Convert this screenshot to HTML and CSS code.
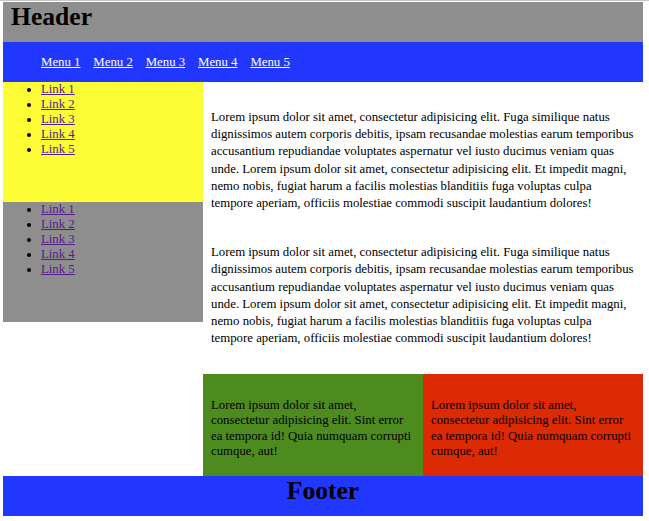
FILE: index.html
```html
<!DOCTYPE html>
<html>
<head>
<meta charset="utf-8">
<title>Layout</title>
<link rel="stylesheet" href="styles.css">
</head>
<body>
<div class="page">
  <header class="header"><h1 class="title">Header</h1></header>
  <nav class="nav">
    <ul class="menu">
      <li><a href="#" class="menu-link">Menu 1</a></li>
      <li><a href="#" class="menu-link">Menu 2</a></li>
      <li><a href="#" class="menu-link">Menu 3</a></li>
      <li><a href="#" class="menu-link">Menu 4</a></li>
      <li><a href="#" class="menu-link">Menu 5</a></li>
    </ul>
  </nav>
  <div class="body-row">
    <aside class="sidebar">
      <div class="side-block yellow">
        <ul class="links">
          <li><a href="#" class="side-link">Link 1</a></li>
          <li><a href="#" class="side-link">Link 2</a></li>
          <li><a href="#" class="side-link">Link 3</a></li>
          <li><a href="#" class="side-link">Link 4</a></li>
          <li><a href="#" class="side-link">Link 5</a></li>
        </ul>
      </div>
      <div class="side-block grey">
        <ul class="links">
          <li><a href="#" class="side-link">Link 1</a></li>
          <li><a href="#" class="side-link">Link 2</a></li>
          <li><a href="#" class="side-link">Link 3</a></li>
          <li><a href="#" class="side-link">Link 4</a></li>
          <li><a href="#" class="side-link">Link 5</a></li>
        </ul>
      </div>
    </aside>
    <main class="main">
      <p class="text">Lorem ipsum dolor sit amet, consectetur adipisicing elit. Fuga similique natus dignissimos autem corporis debitis, ipsam recusandae molestias earum temporibus accusantium repudiandae voluptates aspernatur vel iusto ducimus veniam quas unde. Lorem ipsum dolor sit amet, consectetur adipisicing elit. Et impedit magni, nemo nobis, fugiat harum a facilis molestias blanditiis fuga voluptas culpa tempore aperiam, officiis molestiae commodi suscipit laudantium dolores!</p>
      <p class="text">Lorem ipsum dolor sit amet, consectetur adipisicing elit. Fuga similique natus dignissimos autem corporis debitis, ipsam recusandae molestias earum temporibus accusantium repudiandae voluptates aspernatur vel iusto ducimus veniam quas unde. Lorem ipsum dolor sit amet, consectetur adipisicing elit. Et impedit magni, nemo nobis, fugiat harum a facilis molestias blanditiis fuga voluptas culpa tempore aperiam, officiis molestiae commodi suscipit laudantium dolores!</p>
      <div class="boxes">
        <div class="box green"><p class="box-text">Lorem ipsum dolor sit amet, consectetur adipisicing elit. Sint error ea tempora id! Quia numquam corrupti cumque, aut!</p></div>
        <div class="box red"><p class="box-text">Lorem ipsum dolor sit amet, consectetur adipisicing elit. Sint error ea tempora id! Quia numquam corrupti cumque, aut!</p></div>
      </div>
    </main>
  </div>
  <footer class="footer"><h2 class="foot-title">Footer</h2></footer>
</div>
</body>
</html>
```
FILE: styles.css
```css
html, body {
  margin: 0;
  padding: 0;
}
body {
  border-top: 1px solid #c8c8c8;
  font-family: "Liberation Serif", "Times New Roman", serif;
  font-size: 12.8px;
  color: #000;
  background: #fff;
}
.page {
  width: 640px;
  margin: 1px 0 0 3px;
}
.header {
  height: 40px;
  background: #8e8e8e;
  padding-left: 8px;
}
.title {
  margin: 0;
  font-size: 25.6px;
  font-weight: bold;
}
.nav {
  height: 40px;
  background: #2237fe;
  box-sizing: border-box;
  padding-top: 13px;
}
.menu {
  list-style: none;
  margin: 0;
  padding: 0 0 0 38px;
  display: flex;
  gap: 12.9px;
  line-height: 15px;
}
.menu-link {
  color: #fff;
}
.body-row {
  display: flex;
  align-items: flex-start;
}
.sidebar {
  width: 200px;
  flex: none;
}
.side-block {
  height: 120px;
}
.yellow { background: #fdfd35; }
.grey { background: #8e8e8e; }
.links {
  margin: 0;
  padding-left: 38px;
  line-height: 15px;
}
.side-link {
  color: #551a8b;
}
.main {
  width: 440px;
  flex: none;
  box-sizing: border-box;
  padding-top: 27px;
  display: flex;
  flex-direction: column;
}
.text {
  margin: 0;
  padding: 0 8px;
  line-height: 17.2px;
}
.text + .text {
  margin-top: 32px;
}
.boxes {
  display: flex;
  margin-top: 26.6px;
}
.box {
  width: 220px;
  height: 102px;
  box-sizing: border-box;
  padding: 24px 8px 0;
}
.green { background: #4d8b1f; }
.red { background: #dc2a05; }
.box-text {
  margin: 0;
  line-height: 15.3px;
}
.footer {
  height: 40px;
  background: #2237fe;
  text-align: center;
}
.foot-title {
  margin: 0;
  font-size: 25.6px;
  font-weight: bold;
}
```
